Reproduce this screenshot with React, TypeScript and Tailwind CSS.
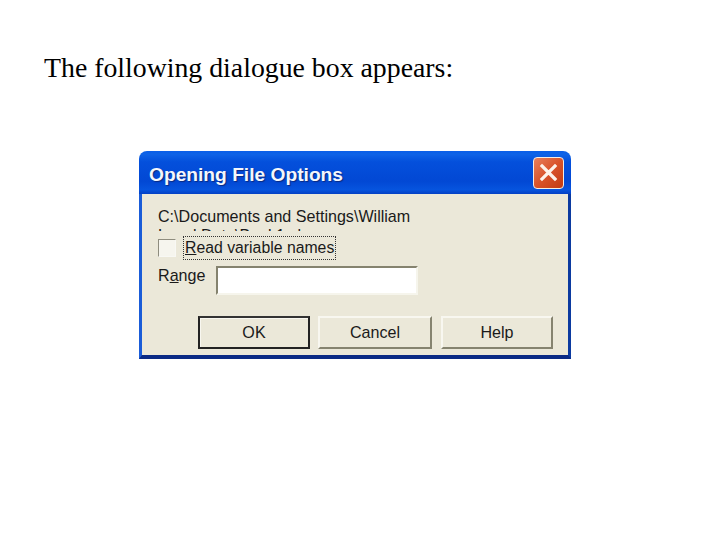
function App() {
  return (
    <div className="w-[720px] h-[540px] bg-white overflow-hidden pt-[48px]">
      <h1 className="ml-[44px] h-[103px] text-[27.8px] leading-[40px] text-black font-['Liberation_Serif',serif]">
        The following dialogue box appears:
      </h1>
      <div className="ml-[139px] w-[432px] h-[208px] flex flex-col rounded-t-[8px] overflow-hidden font-['Liberation_Sans',sans-serif]">
        <div className="h-[43px] shrink-0 flex items-center justify-between pl-[10px] pr-[7px] bg-[linear-gradient(180deg,#0a5fe8_0%,#0f63e6_8%,#0450dc_25%,#0248d4_70%,#0654de_90%,#0340c4_100%)]">
          <span className="mt-[4px] text-[19.2px] leading-[24px] font-bold text-[#f4f7fc] [text-shadow:1px_1px_1px_#0a2a80]">
            Opening File Options
          </span>
          <button className="w-[31px] h-[32px] rounded-[4px] border border-[#f4ece4] bg-[linear-gradient(135deg,#e8805c_0%,#d9532a_50%,#c23a12_100%)] flex items-center justify-center">
            <svg width="21" height="21" viewBox="0 0 21 21">
              <path d="M4 4 L17 17 M17 4 L4 17" stroke="#fdf3ea" strokeWidth="3.2" strokeLinecap="square" />
            </svg>
          </button>
        </div>
        <div className="flex-1 border-l-[3px] border-l-[#1a5cd8] border-r-[3px] border-r-[#0b3aa0] border-b-[4px] border-b-[#0a2a85] bg-[#ebe8d9] pl-[16px] pr-[15px] pt-[13px] text-[#1a1a1a] text-[16.1px]">
          <div className="h-[24px] overflow-hidden leading-[19px] whitespace-nowrap">
            <div>C:\Documents and Settings\William</div>
            <div>Local Data\Book1.xls</div>
          </div>
          <div className="mt-[5px] flex items-center gap-[7px] h-[24px]">
            <span className="w-[18px] h-[18px] bg-[#f6f5ee] border border-[#8e8c7e] border-r-[#f8f8f4] border-b-[#f8f8f4]" />
            <span className="border border-dotted border-[#333] h-[24px] w-[153px] text-[15.8px] leading-[21px] pl-[1px] whitespace-nowrap">
              <span className="underline">R</span>ead variable names
            </span>
          </div>
          <div className="mt-[5px] flex items-center gap-[10px] h-[30px]">
            <span className="w-[48px] leading-[20px] -mt-[10px]">
              R<span className="underline">a</span>nge
            </span>
            <div className="w-[202px] h-[29px] bg-white border-2 border-[#85836f] border-r-[#f6f5ec] border-b-[#f6f5ec]" />
          </div>
          <div className="mt-[21px] flex gap-[8px] pl-[40px] text-center leading-[25px]">
            <button className="w-[112px] h-[33px] bg-[#ebe8d9] border-2 border-[#222] border-t-[#333] shadow-[inset_1px_1px_0_#f8f7f0]">
              OK
            </button>
            <button className="w-[114px] h-[33px] bg-[#ebe8d9] border-2 border-[#f8f7f0] border-r-[#85836f] border-b-[#85836f]">
              Cancel
            </button>
            <button className="w-[112px] h-[33px] ml-[1px] bg-[#ebe8d9] border-2 border-[#f8f7f0] border-r-[#85836f] border-b-[#85836f]">
              Help
            </button>
          </div>
        </div>
      </div>
    </div>
  );
}

export default App;
